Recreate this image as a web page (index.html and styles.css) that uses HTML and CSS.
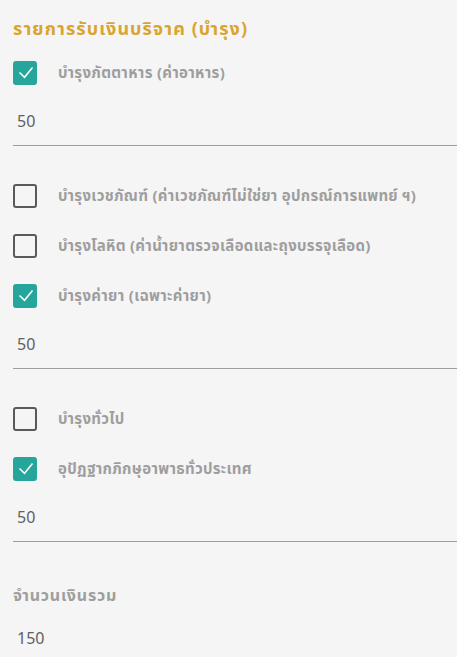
FILE: index.html
```html
<!DOCTYPE html>
<html lang="th">
<head>
    <meta charset="UTF-8">
    <meta name="viewport" content="width=device-width, initial-scale=1.0">
    <title>รายการรับเงินบริจาค</title>
    <link rel="stylesheet" href="styles.css">
</head>
<body>
    <div class="donate">
        <h2 class="title">รายการรับเงินบริจาค (บำรุง)</h2>

        <label class="check on"><span class="box"><svg viewBox="0 0 24 24"><path d="M6.5 11.5l5 4.8 8-9.8"/></svg></span>บำรุงภัตตาหาร (ค่าอาหาร)</label>
        <div class="field">50</div>

        <label class="check first"><span class="box"></span>บำรุงเวชภัณฑ์ (ค่าเวชภัณฑ์ไม่ใช่ยา อุปกรณ์การแพทย์ ฯ)</label>
        <label class="check"><span class="box"></span>บำรุงโลหิต (ค่าน้ำยาตรวจเลือดและถุงบรรจุเลือด)</label>
        <label class="check on"><span class="box"><svg viewBox="0 0 24 24"><path d="M6.5 11.5l5 4.8 8-9.8"/></svg></span>บำรุงค่ายา (เฉพาะค่ายา)</label>
        <div class="field">50</div>

        <label class="check first"><span class="box"></span>บำรุงทั่วไป</label>
        <label class="check on"><span class="box"><svg viewBox="0 0 24 24"><path d="M6.5 11.5l5 4.8 8-9.8"/></svg></span>อุปัฏฐากภิกษุอาพาธทั่วประเทศ</label>
        <div class="field">50</div>

        <div class="total-label">จำนวนเงินรวม</div>
        <div class="total">150</div>
    </div>
</body>
</html>
```

FILE: styles.css
```css
body { margin: 0; background: #f5f5f5; font-family: "Noto Sans", "Noto Sans Thai", sans-serif; }
.donate { padding-left: 13px; }
.title { margin: 0; height: 47px; padding-top: 17px; box-sizing: border-box; font-size: 18px; font-weight: 700; color: #d9a530; line-height: 22px; letter-spacing: 1.1px; }
.check { display: flex; align-items: center; height: 50px; padding-top: 2px; box-sizing: border-box; font-size: 15px; font-weight: 700; color: #9e9e9e; letter-spacing: 0.3px; }
.check.first { margin-top: 24px; }
.box { width: 24px; height: 24px; box-sizing: border-box; border: 2px solid #5a5a5a; border-radius: 3px; margin-right: 21px; flex-shrink: 0; display: flex; align-items: center; justify-content: center; }
.check.on .box { background: #26a69a; border-color: #26a69a; }
.box svg { width: 24px; height: 24px; flex-shrink: 0; fill: none; stroke: #fff; stroke-width: 1.5; }
.field { height: 49px; box-sizing: border-box; border-bottom: 1px solid #9e9e9e; padding: 14px 0 0 4px; font-size: 16px; color: #616161; line-height: 20px; }
.total-label { margin-top: 42px; font-size: 16px; font-weight: 700; color: #9e9e9e; line-height: 22px; letter-spacing: 0.8px; }
.total { padding: 22px 0 0 4px; font-size: 16px; color: #616161; line-height: 20px; }
```
